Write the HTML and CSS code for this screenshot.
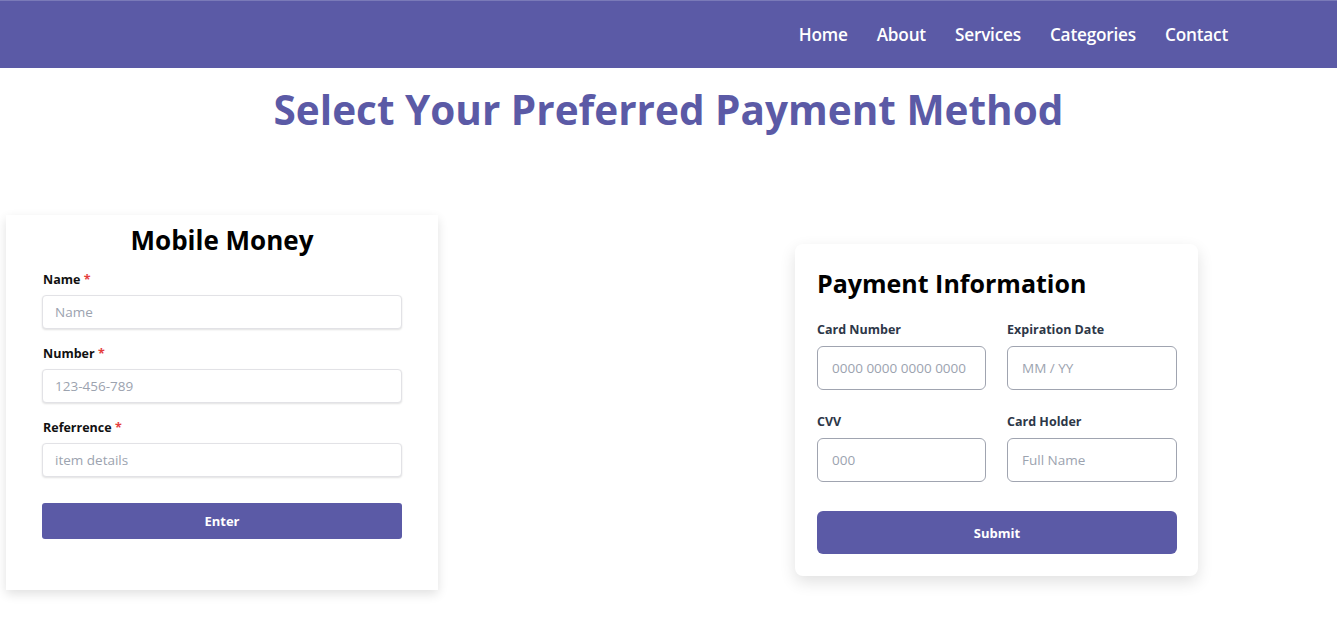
FILE: index.html
```html
<!DOCTYPE html>
<html lang="en">
<head>
<meta charset="utf-8">
<title>Payment</title>
<link rel="stylesheet" href="styles.css">
</head>
<body>
<header class="navbar">
  <nav class="nav-links">
    <a href="#">Home</a>
    <a href="#">About</a>
    <a href="#">Services</a>
    <a href="#">Categories</a>
    <a href="#">Contact</a>
  </nav>
</header>
<h1 class="page-title">Select Your Preferred Payment Method</h1>
<main class="methods">
  <section class="card mobile">
    <h2 class="mobile-title">Mobile Money</h2>
    <form class="mobile-form">
      <div class="field">
        <label>Name <span class="req">*</span></label>
        <input class="soft-input" type="text" placeholder="Name">
      </div>
      <div class="field">
        <label>Number <span class="req">*</span></label>
        <input class="soft-input" type="text" placeholder="123-456-789">
      </div>
      <div class="field">
        <label>Referrence <span class="req">*</span></label>
        <input class="soft-input" type="text" placeholder="item details">
      </div>
      <button type="button" class="btn btn-enter">Enter</button>
    </form>
  </section>
  <section class="card payment">
    <h2 class="pay-title">Payment Information</h2>
    <form class="pay-grid">
      <div class="pfield">
        <label>Card Number</label>
        <input class="box-input" type="text" placeholder="0000 0000 0000 0000">
      </div>
      <div class="pfield">
        <label>Expiration Date</label>
        <input class="box-input" type="text" placeholder="MM / YY">
      </div>
      <div class="pfield">
        <label>CVV</label>
        <input class="box-input" type="text" placeholder="000">
      </div>
      <div class="pfield">
        <label>Card Holder</label>
        <input class="box-input" type="text" placeholder="Full Name">
      </div>
      <button type="button" class="btn btn-submit">Submit</button>
    </form>
  </section>
</main>
</body>
</html>
```

FILE: styles.css
```css
* { box-sizing: border-box; }
html, body { margin: 0; padding: 0; background: #fff; }
body { font-family: "Open Sans", "Noto Sans", "Liberation Sans", sans-serif; color: #000; }

.navbar {
  height: 68px;
  background: #5b5aa6;
  border-top: 1px solid #7a7ab8;
  display: flex;
  justify-content: flex-end;
  align-items: center;
  padding-right: 109px;
}
.nav-links { display: flex; gap: 29px; }
.nav-links a {
  color: #fff;
  text-decoration: none;
  font-size: 17.2px;
  font-weight: 600;
  letter-spacing: -0.2px;
}

.page-title {
  margin: 16px 0 0;
  text-align: center;
  color: #5b5aa6;
  font-size: 40.5px;
  font-weight: 700;
  line-height: 52px;
}

.methods {
  display: flex;
  justify-content: space-between;
  align-items: flex-start;
  padding: 0 139px 30px 6px;
  margin-top: 79px;
}

.card { background: #fff; }

.mobile {
  width: 432px;
  padding: 6px 36px 51px 36px;
  box-shadow: 0 4px 10px rgba(0,0,0,0.12);
}
.mobile-title {
  margin: 0 0 12px;
  text-align: center;
  font-size: 26px;
  font-weight: 700;
  line-height: 38px;
}
.mobile-form { display: flex; flex-direction: column; }
.field { display: flex; flex-direction: column; margin-bottom: 16px; }
.field label {
  font-size: 12.5px;
  font-weight: 700;
  color: #111;
  line-height: 17px;
  margin-bottom: 7px;
  margin-left: 1px;
}
.req { color: #e53e3e; }
.soft-input {
  height: 34px;
  border: 1px solid #e2e2e6;
  border-radius: 4px;
  box-shadow: 0 1px 2px rgba(0,0,0,0.12);
  padding: 0 12px;
  font-family: inherit;
  font-size: 13.5px;
  color: #333;
}
.soft-input::placeholder { color: #9ca3af; }

.btn {
  border: none;
  background: #5b5aa6;
  color: #fff;
  font-family: inherit;
  font-weight: 700;
  font-size: 13px;
  cursor: pointer;
}
.btn-enter {
  margin-top: 10px;
  height: 36px;
  border-radius: 3px;
}

.payment {
  width: 403px;
  margin-top: 29px;
  padding: 22px 21px 22px 22px;
  border-radius: 8px;
  box-shadow: 0 6px 16px rgba(0,0,0,0.12);
}
.pay-title {
  margin: 0 0 21px;
  font-size: 25px;
  font-weight: 700;
  line-height: 34px;
}
.pay-grid {
  display: grid;
  grid-template-columns: 169px 170px;
  column-gap: 21px;
  row-gap: 23px;
}
.pfield { display: flex; flex-direction: column; }
.pfield label {
  font-size: 12.5px;
  font-weight: 700;
  color: #2d3748;
  line-height: 17px;
  margin-bottom: 8px;
}
.box-input {
  height: 44px;
  border: 1px solid #a0a4b0;
  border-radius: 6px;
  padding: 0 14px;
  font-family: inherit;
  font-size: 13.5px;
}
.box-input::placeholder { color: #9ca3af; }
.btn-submit {
  grid-column: 1 / span 2;
  margin-top: 6px;
  height: 43px;
  border-radius: 6px;
}
```
